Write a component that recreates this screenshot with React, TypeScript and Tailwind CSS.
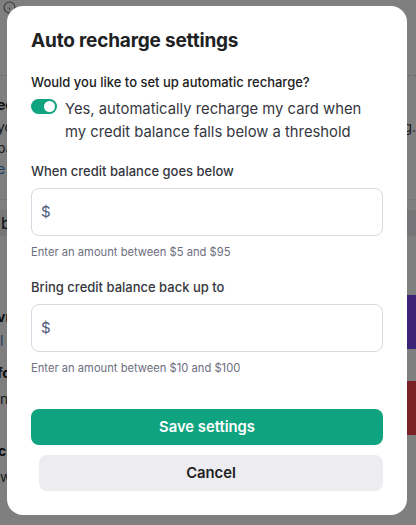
import React from "react";

const font = { fontFamily: "Inter, 'Noto Sans', sans-serif" };

const Field = ({
  label,
  hint,
  className,
}: {
  label: string;
  hint: string;
  className?: string;
}) => (
  <div className={"flex flex-col " + (className ?? "")}>
    <label className="text-[13px] font-medium leading-[20px] text-[#353740]">
      {label}
    </label>
    <div className="mt-[7px] flex h-[48px] items-center rounded-lg border border-[#d9d9e3] px-[9px] text-[15px] text-[#4b5a78]">
      <span>$</span>
      <input className="ml-2 w-full bg-transparent outline-none" />
    </div>
    <p className="mt-[8px] text-[11.2px] leading-[16px] text-[#6e6e80]">
      {hint}
    </p>
  </div>
);

const Background = () => (
  <div className="flex h-full w-full flex-col text-[#202123]">
    <div className="flex h-[20px] items-start pl-[3px] pt-[1px]">
      <svg width="13" height="13" viewBox="0 0 24 24" fill="none" stroke="#6e6e80" strokeWidth="2">
        <circle cx="12" cy="12" r="10" />
        <path d="M12 16v-4M12 8h.01" />
      </svg>
    </div>
    <div className="h-[56px] border-b border-dashed border-[#d9d9e3]" />
    <div className="flex h-[86px] justify-between">
      <div className="ml-[-3px] flex flex-col pt-[18px] text-[14px]">
        <span className="font-bold leading-[22px]">eed</span>
        <span className="leading-[22px] text-[#353740]">you</span>
        <span className="leading-[20px] text-[#353740]">pay</span>
        <span className="leading-[22px] text-[#3b7fc4]">e a</span>
      </div>
      <span className="pt-[40px] text-[14px] text-[#353740]">g.</span>
    </div>
    <div className="h-[38px] border-b border-[#ececf1]" />
    <div className="mt-[10px] flex h-[26px] items-center bg-[#ececf1] pl-[1px] text-[16px]">
      b
    </div>
    <div className="flex h-[59px]" />
    <div className="flex h-[60px] justify-between">
      <div className="flex flex-col pt-[12px] text-[14px]">
        <span className="ml-[-3px] font-bold leading-[20px]">vr</span>
        <span className="mt-[4px] leading-[20px] text-[#3b7fc4]">l c</span>
      </div>
      <div className="h-[54px] w-[9px] bg-[#7845ec]" />
    </div>
    <div className="flex h-[86px] justify-between">
      <div className="flex flex-col pt-[8px] text-[14px]">
        <span className="ml-[-3px] font-bold leading-[20px]">fc</span>
        <span className="mt-[6px] leading-[20px] text-[#353740]">na</span>
      </div>
      <div className="mt-[26px] h-[54px] w-[9px] bg-[#f24249]" />
    </div>
    <div className="flex flex-col text-[14px]">
      <span className="ml-[-2px] font-bold leading-[20px]">ci</span>
      <span className="mt-[6px] leading-[20px] text-[#353740]">w p</span>
    </div>
  </div>
);

const App = () => {
  return (
    <div className="relative h-[525px] w-[416px] overflow-hidden bg-white" style={font}>
      <Background />
      <div className="absolute inset-0 bg-black/50 pl-[7px] pt-[6px]">
        <div className="flex h-[509px] w-[400px] flex-col rounded-2xl bg-white px-6 pt-[21px]">
          <h2 className="text-[19px] font-bold leading-[28px] tracking-[-0.01em] text-[#202123]">
            Auto recharge settings
          </h2>
          <p className="mt-[17px] text-[13px] font-medium leading-[20px] text-[#202123]">
            Would you like to set up automatic recharge?
          </p>
          <div className="mt-[6px] flex items-start gap-[8px]">
            <div className="mt-[1px] flex h-[15px] w-[26px] shrink-0 items-center justify-end rounded-full bg-[#10a37f] px-[2px]">
              <div className="h-[11px] w-[11px] rounded-full bg-white" />
            </div>
            <p className="text-[14.8px] leading-[23px] text-[#353740]">
              Yes, automatically recharge my card when my credit balance falls
              below a threshold
            </p>
          </div>
          <Field
            className="mt-[17px]"
            label="When credit balance goes below"
            hint="Enter an amount between $5 and $95"
          />
          <Field
            className="mt-[17px]"
            label="Bring credit balance back up to"
            hint="Enter an amount between $10 and $100"
          />
          <button className="mt-[33px] h-[36px] rounded-lg bg-[#10a37f] text-[14.8px] font-semibold text-white">
            Save settings
          </button>
          <button className="ml-2 mt-[10px] h-[36px] rounded-lg bg-[#ececf1] text-[14.8px] font-semibold text-[#202123]">
            Cancel
          </button>
        </div>
      </div>
    </div>
  );
};

export default App;
